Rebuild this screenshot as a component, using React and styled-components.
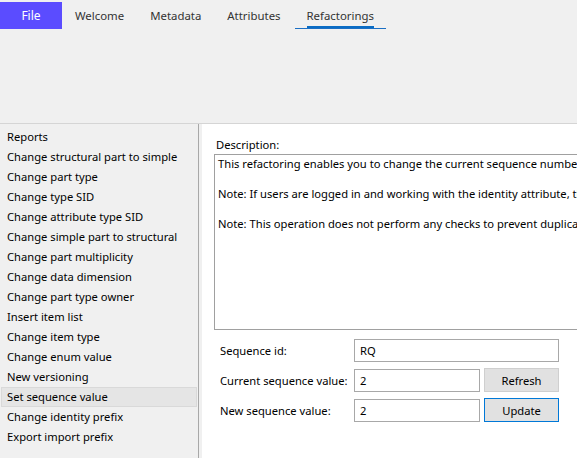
import React from "react";
import styled, { createGlobalStyle } from "styled-components";

const Global = createGlobalStyle`
  html, body { margin: 0; padding: 0; }
  body {
    width: 577px; height: 458px; overflow: hidden;
    background: #f0f0f0;
    font-family: "Noto Sans", "Segoe UI", sans-serif;
    font-size: 11.2px;
    color: #000;
  }
`;

const Page = styled.div`
  width: 577px; height: 458px;
  display: flex; flex-direction: column;
  overflow: hidden;
`;

const Ribbon = styled.div`
  flex: none;
  background: #f0f0f0;
  border-bottom: 1px solid #d5d5d5;
  display: flex; align-items: flex-start;
  padding-top: 2px;
  box-sizing: border-box;
  height: 124px;
`;

const FileButton = styled.div`
  width: 62px; height: 27px;
  background: #5b4cff; color: #fff;
  display: flex; align-items: center; justify-content: center;
  font-size: 12px;
`;

const Tabs = styled.div`
  display: flex; margin-left: 1px;
`;

const Tab = styled.div`
  height: 27px;
  padding: 0 12px;
  margin-right: 2px;
  display: flex; align-items: center; justify-content: center;
  font-size: 11.4px; color: #333;
  position: relative;
  border-bottom: ${p => (p.$active ? "1px solid #1b6fc4" : "1px solid transparent")};
  box-sizing: border-box;
  &::after {
    content: "";
    display: ${p => (p.$active ? "block" : "none")};
    position: absolute; left: 12px; right: 12px; bottom: 0;
    height: 2px; background: #0a6cc4;
  }
`;

const Body = styled.div`
  flex: 1; display: flex; min-height: 0;
`;

const Sidebar = styled.div`
  width: 198px; flex: none;
  background: #f0f0f0;
  border-right: 1px solid #a8a8a8;
  padding-top: 3px;
`;

const Item = styled.div`
  height: 20px; line-height: 18px;
  padding-left: 5px;
  margin: 0 1px;
  box-sizing: border-box;
  border: 1px solid ${p => (p.$selected ? "#d9d9d9" : "transparent")};
  background: ${p => (p.$selected ? "#e5e5e5" : "transparent")};
  white-space: nowrap;
`;

const Gutter = styled.div`
  width: 3px; flex: none; background: #f0f0f0;
`;

const Content = styled.div`
  flex: 1; background: #fff;
  padding: 11px 0 0 12px;
  overflow: hidden;
  min-width: 0;
`;

const Label = styled.div`
  height: 19px; line-height: 19px;
  padding-left: 2px;
`;

const DescBox = styled.div`
  width: 420px; height: 176px;
  border: 1px solid #a0a0a0;
  padding: 1px 3px;
  box-sizing: border-box;
  white-space: pre;
  line-height: 15px;
  overflow: hidden;
`;

const Form = styled.div`
  display: grid;
  grid-template-columns: 130px 126px 75px;
  column-gap: 4px;
  row-gap: 6px;
  margin-top: 9px;
  padding-left: 6px;
  align-items: center;
`;

const FormLabel = styled.div`
  white-space: nowrap;
`;

const Input = styled.div`
  grid-column: ${p => (p.$wide ? "2 / span 2" : "auto")};
  height: 23px; box-sizing: border-box;
  border: 1px solid #a8a8a8;
  padding-left: 5px;
  display: flex; align-items: center;
  background: #fff;
`;

const Button = styled.div`
  height: 24px; box-sizing: border-box;
  border: 1px solid ${p => (p.$focus ? "#0078d7" : "#cfcfcf")};
  background: #e1e1e1;
  display: flex; align-items: center; justify-content: center;
`;

const items = [
  "Reports",
  "Change structural part to simple",
  "Change part type",
  "Change type SID",
  "Change attribute type SID",
  "Change simple part to structural",
  "Change part multiplicity",
  "Change data dimension",
  "Change part type owner",
  "Insert item list",
  "Change item type",
  "Change enum value",
  "New versioning",
  "Set sequence value",
  "Change identity prefix",
  "Export import prefix",
];

const desc = `This refactoring enables you to change the current sequence number of a sequence.

Note: If users are logged in and working with the identity attribute, they should log out first.

Note: This operation does not perform any checks to prevent duplicate values.`;

export default function App() {
  return (
    <Page>
      <Global />
      <Ribbon>
        <FileButton>File</FileButton>
        <Tabs>
          <Tab>Welcome</Tab>
          <Tab>Metadata</Tab>
          <Tab>Attributes</Tab>
          <Tab $active>Refactorings</Tab>
        </Tabs>
      </Ribbon>
      <Body>
        <Sidebar>
          {items.map(t => (
            <Item key={t} $selected={t === "Set sequence value"}>{t}</Item>
          ))}
        </Sidebar>
        <Gutter />
        <Content>
          <Label>Description:</Label>
          <DescBox>{desc}</DescBox>
          <Form>
            <FormLabel>Sequence id:</FormLabel>
            <Input $wide>RQ</Input>
            <FormLabel>Current sequence value:</FormLabel>
            <Input>2</Input>
            <Button>Refresh</Button>
            <FormLabel>New sequence value:</FormLabel>
            <Input>2</Input>
            <Button $focus>Update</Button>
          </Form>
        </Content>
      </Body>
    </Page>
  );
}
